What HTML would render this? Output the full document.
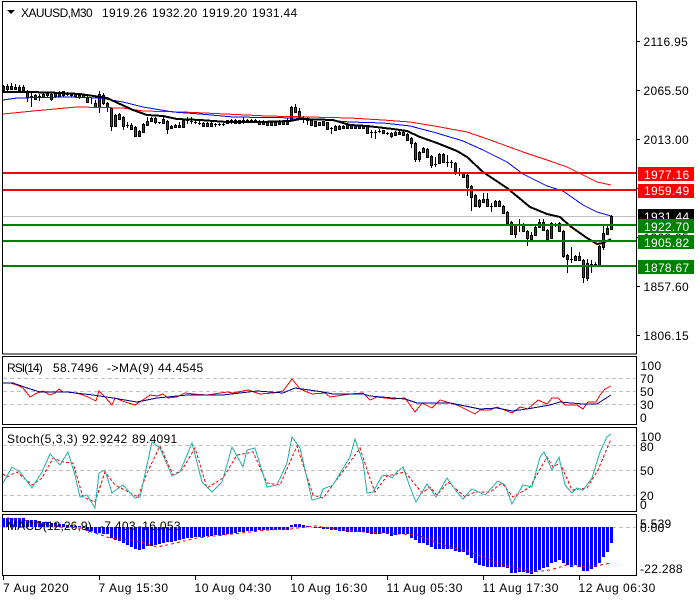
<!DOCTYPE html>
<html><head><meta charset="utf-8"><style>
html,body{margin:0;padding:0;background:#fff}
svg{display:block}
text{font-family:"Liberation Sans",sans-serif;font-size:12px;letter-spacing:.3px;fill:#000}
.w text{fill:#fff}
.t text{letter-spacing:.55px}
polyline{shape-rendering:crispEdges}
</style></head><body>
<svg width="700" height="600" viewBox="0 0 700 600" xmlns="http://www.w3.org/2000/svg" fill="none">
<rect width="700" height="600" fill="#fff"/>
<g stroke="#000" shape-rendering="crispEdges">
<rect x="2.5" y="1.5" width="634" height="352.5"/>
<rect x="2.5" y="356.5" width="634" height="68"/>
<rect x="2.5" y="427.5" width="634" height="84"/>
<rect x="2.5" y="514.5" width="634" height="61"/>
<path d="M636 41.5h4M636 90.5h4M636 139.5h4M636 188.5h4M636 237.5h4M636 286.5h4M636 335.5h4M3.5 576v4M99.5 576v4M195.5 576v4M291.5 576v4M387.5 576v4M483.5 576v4M579.5 576v4"/>
</g>
<path d="M7 10h8l-4 4z" fill="#000"/>
<g stroke="#c0c0c0" stroke-dasharray="4 3" shape-rendering="crispEdges">
<path d="M3 378.500H636M3 391.500H636M3 404.500H636M3 445.500H636M3 470.500H636M3 495.500H636M3 527.500H636"/>
</g>
<path d="M3 216.500H636" stroke="#c0c0c0" shape-rendering="crispEdges"/>

<!-- wicks -->
<path stroke="#000" shape-rendering="crispEdges" d="M3.5 85V91M7.5 84V91M11.5 83V90M15.500 84V90M19.500 85V90M23.500 85V91M27.500 90V102M31.500 93V107M35.500 94V100M39.500 94V101M43.500 93V98M47.500 92V98M51.500 93V101M55.500 92V98M59.500 91V97M63.500 91V97M67.500 92V96M71.500 93V97M75.500 94V98M79.500 94V99M83.500 94V98M87.500 95V102M91.500 97V104M95.500 100V107M99.500 91V113M103.500 93V105M107.500 102V112M111.500 108V131M115.500 114V126M119.500 113V120M123.500 116V130M127.500 122V128M131.500 123V130M135.500 126V137M139.500 130V137M143.500 123V132M147.500 117V125M151.500 117V122M155.500 117V124M159.500 122V124M163.500 115V123M167.500 120V134M171.500 125V129M175.500 124V128M179.500 122V128M183.500 120V127M187.500 117V124M191.500 117V124M195.500 120V124M199.500 121V125M203.500 122V126M207.500 122V126M211.500 122V126M215.500 123V127M219.500 123V126M223.500 123V126M227.500 120V124M231.500 119V124M235.500 119V124M239.500 120V124M243.500 117V124M247.500 119V123M251.500 119V123M255.500 119V122M259.500 120V125M263.500 120V125M267.500 121V126M271.500 121V126M275.500 121V126M279.500 120V125M283.500 120V125M287.500 118V124M291.500 106V120M295.500 104V113M299.500 108V118M303.500 116V123M307.500 117V125M311.500 120V126M315.500 121V126M319.500 122V125M323.500 121V125M327.500 122V130M331.500 127V134M335.500 125V130M339.500 125V130M343.500 125V129M347.500 123V128M351.500 125V129M355.500 125V128M359.500 125V128M363.500 125V128M367.500 125V133M371.500 130V138M375.500 130V139M379.500 129V133M383.500 130V134M387.500 132V135M391.500 132V138M395.500 131V136M399.500 131V135M403.500 131V136M407.500 133V141M411.500 137V148M415.500 142V162M419.500 151V162M423.500 147V153M427.500 148V158M431.500 155V168M435.500 157V167M439.500 153V164M443.500 153V163M447.500 155V167M451.500 160V168M455.500 162V175M459.500 168V176M463.500 172V177M467.500 174V196M471.500 185V211M475.500 194V207M479.500 199V208M483.500 193V203M487.500 193V207M491.500 203V212M495.500 200V207M499.500 200V207M503.500 205V214M507.500 211V226M511.500 221V235M515.500 224V238M519.500 219V232M523.500 223V232M527.500 230V246M531.500 232V240M535.500 226V236M539.500 219V228M543.500 219V231M547.500 229V240M551.500 222V239M555.500 223V227M559.500 222V232M563.500 230V258M567.500 254V273M571.500 247V263M575.500 255V261M579.500 252V261M583.500 259V283M587.500 259V281M591.500 260V273M595.500 262V266M599.500 245V266M603.500 226V250M607.500 226V235M611.500 215V230"/>

<!-- dojis -->
<path stroke="#000" shape-rendering="crispEdges" d="M30 96.500h3M38 96.500h3M126 125.500h3M158 122.500h3M186 120.500h3M190 121.500h3M194 122.500h3M198 123.500h3M214 124.500h3M218 124.500h3M222 124.500h3M302 118.500h3M306 120.500h3M330 128.500h3M370 132.500h3M374 132.500h3M378 131.500h3M386 133.500h3M434 164.500h3M446 162.500h3M450 162.500h3M458 172.500h3M490 206.500h3M518 225.500h3M554 225.500h3M570 259.500h3M590 264.500h3M594 264.500h3"/>

<!-- bearish -->
<path fill="#e00000" stroke="#000" shape-rendering="crispEdges" d="M6.500 86.500h2v3h-2zM14.500 87.500h2v2h-2zM22.500 87.500h2v3h-2zM26.500 92.500h2v5h-2zM50.500 94.500h2v5h-2zM70.500 94.500h2v1h-2zM74.500 94.500h2v2h-2zM78.500 95.500h2v2h-2zM86.500 97.500h2v5h-2zM94.500 103.500h2v4h-2zM102.500 95.500h2v8h-2zM106.500 103.500h2v4h-2zM110.500 108.500h2v18h-2zM118.500 114.500h2v5h-2zM122.500 117.500h2v9h-2zM130.500 125.500h2v4h-2zM134.500 127.500h2v9h-2zM154.500 118.500h2v4h-2zM166.500 121.500h2v8h-2zM202.500 123.500h2v3h-2zM206.500 123.500h2v3h-2zM210.500 123.500h2v3h-2zM258.500 121.500h2v3h-2zM262.500 121.500h2v3h-2zM266.500 122.500h2v3h-2zM270.500 122.500h2v3h-2zM274.500 122.500h2v3h-2zM294.500 107.500h2v5h-2zM298.500 111.500h2v6h-2zM310.500 120.500h2v5h-2zM326.500 122.500h2v7h-2zM366.500 125.500h2v8h-2zM382.500 130.500h2v3h-2zM390.500 133.500h2v3h-2zM402.500 132.500h2v3h-2zM406.500 134.500h2v6h-2zM410.500 138.500h2v5h-2zM414.500 143.500h2v16h-2zM422.500 148.500h2v4h-2zM426.500 149.500h2v8h-2zM430.500 156.500h2v9h-2zM454.500 163.500h2v9h-2zM462.500 173.500h2v4h-2zM466.500 175.500h2v12h-2zM470.500 186.500h2v11h-2zM474.500 195.500h2v11h-2zM486.500 199.500h2v7h-2zM498.500 201.500h2v5h-2zM502.500 206.500h2v7h-2zM506.500 212.500h2v11h-2zM510.500 222.500h2v12h-2zM522.500 224.500h2v7h-2zM526.500 231.500h2v7h-2zM530.500 235.500h2v4h-2zM542.500 222.500h2v8h-2zM546.500 230.500h2v9h-2zM558.500 223.500h2v8h-2zM562.500 231.500h2v25h-2zM566.500 255.500h2v4h-2zM578.500 256.500h2v4h-2zM582.500 260.500h2v17h-2z"/>

<!-- bullish -->
<path fill="#006400" stroke="#000" shape-rendering="crispEdges" d="M2.500 86.500h2v4h-2zM10.500 86.500h2v3h-2zM18.500 87.500h2v3h-2zM34.500 95.500h2v4h-2zM42.500 94.500h2v3h-2zM46.500 93.500h2v2h-2zM54.500 93.500h2v3h-2zM58.500 92.500h2v4h-2zM62.500 91.500h2v4h-2zM66.500 93.500h2v1h-2zM82.500 94.500h2v3h-2zM98.500 94.500h2v13h-2zM114.500 115.500h2v11h-2zM138.500 131.500h2v5h-2zM142.500 124.500h2v8h-2zM146.500 121.500h2v4h-2zM150.500 118.500h2v3h-2zM162.500 119.500h2v4h-2zM170.500 126.500h2v2h-2zM174.500 125.500h2v2h-2zM178.500 125.500h2v2h-2zM182.500 120.500h2v7h-2zM226.500 120.500h2v3h-2zM230.500 120.500h2v2h-2zM234.500 120.500h2v3h-2zM238.500 120.500h2v3h-2zM242.500 120.500h2v2h-2zM246.500 120.500h2v2h-2zM250.500 120.500h2v2h-2zM254.500 120.500h2v1h-2zM278.500 121.500h2v3h-2zM282.500 121.500h2v3h-2zM286.500 120.500h2v4h-2zM290.500 107.500h2v13h-2zM314.500 121.500h2v5h-2zM318.500 122.500h2v3h-2zM322.500 121.500h2v4h-2zM334.500 126.500h2v4h-2zM338.500 126.500h2v3h-2zM342.500 126.500h2v2h-2zM346.500 124.500h2v4h-2zM350.500 125.500h2v3h-2zM354.500 125.500h2v3h-2zM358.500 125.500h2v3h-2zM362.500 125.500h2v3h-2zM394.500 132.500h2v3h-2zM398.500 132.500h2v2h-2zM418.500 152.500h2v7h-2zM438.500 154.500h2v9h-2zM442.500 154.500h2v8h-2zM478.500 200.500h2v6h-2zM482.500 199.500h2v3h-2zM494.500 201.500h2v5h-2zM514.500 225.500h2v9h-2zM534.500 227.500h2v8h-2zM538.500 222.500h2v5h-2zM550.500 223.500h2v15h-2zM574.500 256.500h2v4h-2zM586.500 263.500h2v15h-2zM598.500 246.500h2v19h-2zM602.500 233.500h2v14h-2zM606.500 228.500h2v6h-2zM610.500 216.500h2v13h-2z"/>

<!-- moving averages -->
<polyline stroke="#f00" points="3,114 33,111 77,107 123,108 143,111 183,112 267,116 350,118 383,120 410,122 440,127 467,132 493,141 523,152 550,161 567,167 583,175 597,182 611,185"/>
<polyline stroke="#00f" points="3,100 17,98 67,97 100,98 123,102 143,107 173,112 200,114 233,117 300,118 350,122 383,123 410,126 433,132 463,141 483,150 507,162 523,174 547,186 563,191 583,205 597,212 611,216"/>
<polyline stroke="#000" stroke-width="2" points="3,92 27,92 50,92.500 80,94 107,98 133,110 147,115 163,116 177,119 200,120 227,122 260,122 290,121 300,119 333,120 350,125 367,126 393,129 407,131 420,137 437,143 457,151 467,157 483,172 507,188 530,207 547,214 560,217 570,226 587,238 597,244 603,243 611,239"/>

<!-- horizontal levels -->
<g stroke-width="2" shape-rendering="crispEdges">
<path stroke="#f00" d="M3 173H636M3 190H636"/>
<path stroke="#008000" d="M3 225H636M3 241H636M3 266H636"/>
</g>

<!-- RSI -->
<polyline stroke="#f00" points="3,383 10,383 17,385 23,388 30,397 37,393 43,391 50,395 55,393 59,389 63,392 70,392 80,394 88,397 96,401 99,391 105,397 112,405 115,398 125,402 135,405 143,400 150,395 157,396 163,394 168,398 177,397 185,393 193,394 207,395 227,392 233,393 248,390 260,394 273,393 283,391 292,379 300,389 312,394 325,393 330,397 350,394 363,393 370,400 377,397 393,399 405,398 415,412 422,403 432,408 440,400 457,405 475,414 480,410 490,410 497,407 512,413 520,407 528,409 538,400 547,404 552,398 558,398 565,405 577,405 583,409 588,402 596,402 600,395 605,389 611,386"/>
<polyline stroke="#00008b" points="3,383 13,383 27,388 40,392 67,392 93,395 113,398 137,402 157,398 187,395 223,395 257,391 283,393 295,388 323,392 333,394 350,394 363,394 370,396 393,398 405,399 417,403 450,403 480,409 497,408 512,411 527,409 550,405 560,402 583,404 597,404 611,395"/>

<!-- Stoch -->
<polyline stroke="#f00" stroke-dasharray="3 2" points="3,474 7,477 17,472 32,485 42,478 53,458 63,462 73,463 83,497 95,502 105,472 115,485 138,497 147,473 160,446 173,475 182,470 195,448 207,488 223,478 237,455 253,452 267,483 280,485 297,446 313,495 323,498 350,462 360,448 368,473 375,492 387,476 405,472 422,493 430,487 437,495 448,482 465,497 475,492 490,492 502,483 513,497 530,487 547,457 553,467 560,463 572,490 587,488 598,470 611,439"/>
<polyline stroke="#20b2aa" points="3,483 12,467 20,472 32,488 42,472 50,454 60,465 68,452 75,475 80,497 87,495 95,508 99,473 105,470 112,493 123,485 135,498 140,497 152,442 160,448 172,476 180,472 192,443 202,482 212,492 222,482 232,447 243,467 247,450 255,448 267,487 277,485 287,463 292,437 300,448 312,500 320,498 323,489 333,485 350,457 355,439 363,462 367,493 373,492 382,476 387,475 392,478 397,472 403,467 410,487 416,502 427,484 436,497 447,478 457,492 463,499 472,489 485,495 498,481 505,485 512,504 523,485 532,487 540,457 544,452 552,470 559,457 565,485 572,493 577,488 583,490 592,478 600,452 607,437 611,434"/>

<!-- MACD histogram -->
<path stroke="#00f" stroke-width="3" shape-rendering="crispEdges" d="M3.500 527V518M7.500 527V518M11.500 527V518M15.500 527V518M19.500 527V518M23.500 527V518M27.500 527V520M31.500 527V520M35.500 527V520M39.500 527V521M43.500 527V522M47.500 527V522M51.500 527V523M55.500 527V523M59.500 527V524M63.500 527V524M67.500 527V525M71.500 527V525M75.500 527V526M79.500 527V526M83.500 527V528M87.500 527V531M91.500 527V531M95.500 527V533M99.500 527V533M103.500 527V534M107.500 527V534M111.500 527V538M115.500 527V540M119.500 527V541M123.500 527V543M127.500 527V545M131.500 527V547M135.500 527V549M139.500 527V550M143.500 527V549M147.500 527V546M151.500 527V546M155.500 527V545M159.500 527V544M163.500 527V543M167.500 527V542M171.500 527V542M175.500 527V541M179.500 527V540M183.500 527V539M187.500 527V538M191.500 527V538M195.500 527V537M199.500 527V537M203.500 527V537M207.500 527V536M211.500 527V536M215.500 527V535M219.500 527V535M223.500 527V535M227.500 527V534M231.500 527V534M235.500 527V533M239.500 527V532M243.500 527V532M247.500 527V531M251.500 527V531M255.500 527V531M259.500 527V530M263.500 527V530M267.500 527V530M271.500 527V530M275.500 527V530M279.500 527V530M283.500 527V530M287.500 527V530M291.500 527V525M295.500 527V524M299.500 527V524M303.500 527V525M307.500 527V526M315.500 527V528M319.500 527V528M323.500 527V529M327.500 527V529M331.500 527V530M335.500 527V530M339.500 527V531M343.500 527V531M347.500 527V532M351.500 527V532M355.500 527V532M359.500 527V532M363.500 527V532M367.500 527V533M371.500 527V534M375.500 527V534M379.500 527V534M383.500 527V533M387.500 527V534M391.500 527V536M395.500 527V535M399.500 527V534M403.500 527V534M407.500 527V534M411.500 527V538M415.500 527V540M419.500 527V543M423.500 527V543M427.500 527V545M431.500 527V547M435.500 527V549M439.500 527V549M443.500 527V549M447.500 527V549M451.500 527V549M455.500 527V551M459.500 527V552M463.500 527V552M467.500 527V555M471.500 527V558M475.500 527V563M479.500 527V565M483.500 527V566M487.500 527V567M491.500 527V567M495.500 527V567M499.500 527V567M503.500 527V567M507.500 527V568M511.500 527V573M515.500 527V573M519.500 527V572M523.500 527V572M527.500 527V573M531.500 527V574M535.500 527V572M539.500 527V570M543.500 527V568M547.500 527V567M551.500 527V563M555.500 527V562M559.500 527V560M563.500 527V563M567.500 527V565M571.500 527V567M575.500 527V565M579.500 527V567M583.500 527V571M587.500 527V571M591.500 527V569M595.500 527V567M599.500 527V563M603.500 527V557M607.500 527V552M611.500 527V543"/>
<polyline stroke="#f00" stroke-dasharray="3 3" points="7,518 23,520 37,523 57,527 80,528 110,538 133,540 157,547 167,545 197,538 233,534 267,530 290,529 315,526 350,531 383,533 417,535 433,541 450,547 470,552 490,560 510,567 533,572 550,570 567,565 590,567 611,563"/>

<!-- legends -->
<text x="21" y="17" textLength="72" lengthAdjust="spacing">XAUUSD,M30</text>
<text x="102" y="17">1919.26</text>
<text x="152" y="17">1932.20</text>
<text x="202" y="17">1919.20</text>
<text x="252" y="17">1931.44</text>
<text x="7" y="372" textLength="36" lengthAdjust="spacing">RSI(14)</text>
<text x="53" y="372">58.7496</text>
<text x="107" y="372" textLength="47" lengthAdjust="spacing">-&gt;MA(9)</text>
<text x="158" y="372">44.4545</text>
<text x="7" y="443" textLength="71" lengthAdjust="spacing">Stoch(5,3,3)</text>
<text x="82" y="443">92.9242</text>
<text x="132" y="443">89.4091</text>
<text x="7" y="530" textLength="85" lengthAdjust="spacing">MACD(12,26,9)</text>
<text x="100" y="530">-7.403</text>
<text x="138" y="530">-16.053</text>

<!-- price axis -->
<text x="643.500" y="46">2116.95</text>
<text x="643.500" y="95">2065.50</text>
<text x="643.500" y="144">2013.00</text>
<text x="643.500" y="193">1961.20</text>
<text x="643.500" y="242">1909.05</text>
<text x="643.500" y="291">1857.60</text>
<text x="643.500" y="340">1806.15</text>

<g shape-rendering="crispEdges">
<rect x="638" y="167" width="56" height="14" fill="#f00"/>
<rect x="638" y="184" width="56" height="14" fill="#f00"/>
<rect x="638" y="209" width="56" height="14" fill="#000"/>
</g>
<g class="w">
<text x="644" y="179">1977.16</text>
<text x="644" y="195">1959.49</text>
<text x="644" y="221">1931.44</text>
</g>
<g shape-rendering="crispEdges">
<rect x="638" y="219" width="56" height="14" fill="#008000"/>
<rect x="638" y="235" width="56" height="14" fill="#008000"/>
<rect x="638" y="260" width="56" height="14" fill="#008000"/>
</g>
<g class="w">
<text x="644" y="231">1922.70</text>
<text x="644" y="247">1905.82</text>
<text x="644" y="272">1878.67</text>
</g>

<!-- indicator axes -->
<text x="640.500" y="370">100</text>
<text x="640" y="383">70</text>
<text x="640" y="396">50</text>
<text x="640" y="409">30</text>
<text x="640" y="422">0</text>
<text x="640.500" y="441">100</text>
<text x="640" y="451">80</text>
<text x="640" y="475">50</text>
<text x="640" y="500">20</text>
<text x="640" y="509">0</text>
<text x="640" y="528">5.539</text>
<text x="640" y="532">0.00</text>
<text x="640" y="573">-22.288</text>

<!-- time axis -->
<g class="t">
<text x="3" y="592">7 Aug 2020</text>
<text x="98.500" y="592">7 Aug 15:30</text>
<text x="194.500" y="592">10 Aug 04:30</text>
<text x="290.500" y="592">10 Aug 16:30</text>
<text x="386.500" y="592">11 Aug 05:30</text>
<text x="482.500" y="592">11 Aug 17:30</text>
<text x="578.500" y="592">12 Aug 06:30</text>
</g>
</svg>
</body></html>
